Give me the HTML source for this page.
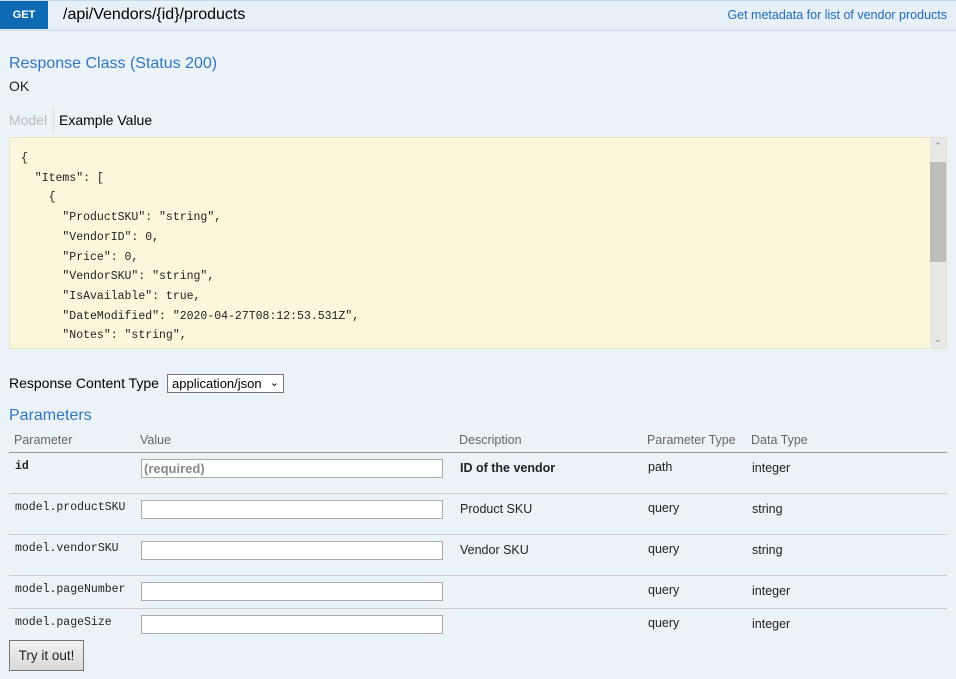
<!DOCTYPE html>
<html><head><style>
*{margin:0;padding:0;box-sizing:border-box}
body{width:956px;height:679px;background:#ebf3f9;font-family:"Liberation Sans",Arial,sans-serif;position:relative;overflow:hidden;color:#222}
.a{position:absolute;white-space:nowrap}
.hdr{position:absolute;left:0;top:0;width:956px;height:31px;background:#e7f0f7;border-top:1px solid #c3d9ec;border-bottom:1px solid #c3d9ec}
.get{position:absolute;left:0;top:1px;width:48px;height:28px;background:#0f6ab4;color:#fff;font-size:11px;font-weight:bold;text-align:center;line-height:29px}
.code{position:absolute;left:9px;top:137px;width:938px;height:212px;background:#fcf6db;border:1px solid #e5e0c6;overflow:hidden}
pre{font-family:"Liberation Mono",monospace;font-size:11.5px;line-height:19.7px;position:absolute;left:11px;top:11px;color:#222}
.sb{position:absolute;right:0;top:0;width:16px;height:210px;background:#e8e8e8}
.th{position:absolute;left:16px;top:24px;width:16px;height:100px;background:#bdbdbd;left:0}
.mono{font-family:"Liberation Mono",monospace;font-size:11.5px}
.in{position:absolute;left:141px;width:302px;height:19px;background:#fff;border:1px solid #aaa}
.ln{position:absolute;left:9px;width:938px;height:1px;background:#ccc}
.gh{color:#666;font-size:12.5px}
.t{font-size:12.5px}
</style></head><body>
<div class="hdr"></div>
<div class="get">GET</div>
<div class="a" style="left:63px;top:6px;font-size:16px;color:#000">/api/Vendors/{id}/products</div>
<div class="a" style="right:9px;top:8px;font-size:12.5px;color:#1f69c0">Get metadata for list of vendor products</div>
<div class="a" style="left:9px;top:55px;font-size:16px;color:#3276c3">Response Class (Status 200)</div>
<div class="a" style="left:9px;top:78px;font-size:14px;color:#222">OK</div>
<div class="a" style="left:9px;top:112px;font-size:14px;color:#bbb">Model</div>
<div class="a" style="left:53px;top:108px;width:1px;height:24px;background:#ddd"></div>
<div class="a" style="left:59px;top:112px;font-size:14px;color:#000">Example Value</div>
<div class="code"><pre>{
  "Items": [
    {
      "ProductSKU": "string",
      "VendorID": 0,
      "Price": 0,
      "VendorSKU": "string",
      "IsAvailable": true,
      "DateModified": "2020-04-27T08:12:53.531Z",
      "Notes": "string",</pre>
<div class="sb"><div style="position:absolute;top:3px;left:4px;font-size:9px;color:#888">&#8963;</div><div class="th"></div><div style="position:absolute;bottom:3px;left:4px;font-size:9px;color:#888">&#8964;</div></div></div>
<div class="a" style="left:9px;top:375px;font-size:14px;color:#000">Response Content Type</div>
<div class="a" style="left:167px;top:374px;width:117px;height:19px;background:#fff;border:1px solid #777;font-size:13px;padding-left:4px;line-height:17px;color:#000">application/json <span style="position:absolute;right:4px;top:0;font-size:11px">&#8964;</span></div>
<div class="a" style="left:9px;top:407px;font-size:16px;color:#3276c3">Parameters</div>
<div class="a gh" style="left:14px;top:433px">Parameter</div>
<div class="a gh" style="left:140px;top:433px">Value</div>
<div class="a gh" style="left:459px;top:433px">Description</div>
<div class="a gh" style="left:647px;top:433px">Parameter Type</div>
<div class="a gh" style="left:751px;top:433px">Data Type</div>
<div class="ln" style="top:452px;background:#999"></div>
<div class="a mono" style="left:15px;top:460px;font-weight:bold">id</div>
<div class="in" style="top:459px"><span style="position:absolute;left:2px;top:1px;font-size:13px;color:#888;font-weight:bold">(required)</span></div>
<div class="a t" style="left:460px;top:461px;font-weight:bold">ID of the vendor</div>
<div class="a t" style="left:648px;top:460px">path</div>
<div class="a t" style="left:752px;top:461px">integer</div>
<div class="ln" style="top:493px"></div>
<div class="a mono" style="left:15px;top:501px">model.productSKU</div>
<div class="in" style="top:500px"></div>
<div class="a t" style="left:460px;top:502px">Product SKU</div>
<div class="a t" style="left:648px;top:501px">query</div>
<div class="a t" style="left:752px;top:502px">string</div>
<div class="ln" style="top:534px"></div>
<div class="a mono" style="left:15px;top:542px">model.vendorSKU</div>
<div class="in" style="top:541px"></div>
<div class="a t" style="left:460px;top:543px">Vendor SKU</div>
<div class="a t" style="left:648px;top:542px">query</div>
<div class="a t" style="left:752px;top:543px">string</div>
<div class="ln" style="top:575px"></div>
<div class="a mono" style="left:15px;top:583px">model.pageNumber</div>
<div class="in" style="top:582px"></div>
<div class="a t" style="left:648px;top:583px">query</div>
<div class="a t" style="left:752px;top:584px">integer</div>
<div class="ln" style="top:608px"></div>
<div class="a mono" style="left:15px;top:616px">model.pageSize</div>
<div class="in" style="top:615px"></div>
<div class="a t" style="left:648px;top:616px">query</div>
<div class="a t" style="left:752px;top:617px">integer</div>
<div class="a" style="left:9px;top:640px;width:75px;height:31px;border:1px solid #777;background:linear-gradient(#f2f2f2,#d8d8d8);font-size:13.5px;text-align:center;line-height:29px;color:#222">Try it out!</div>
</body></html>
